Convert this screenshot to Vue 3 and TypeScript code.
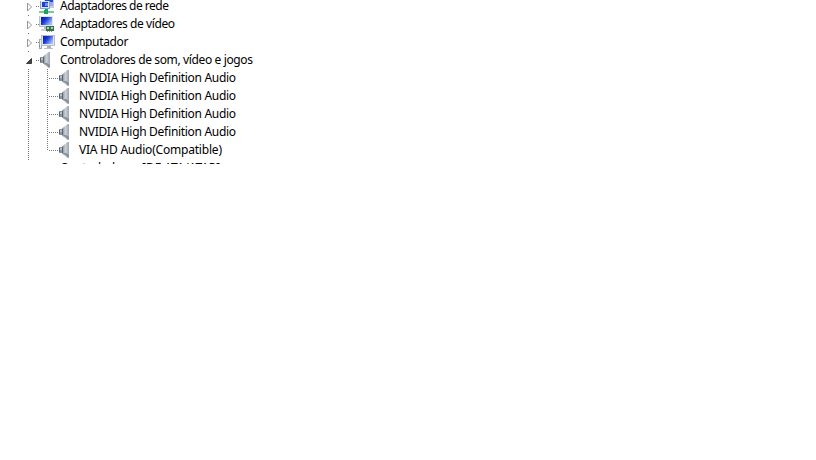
<script setup lang="ts">
type Kind = 'network' | 'display' | 'computer' | 'sound' | 'none'
interface Item { label: string; kind: Kind; child?: boolean; open?: boolean; last?: boolean; width: number }

const items: Item[] = [
  { label: 'Adaptadores de rede', kind: 'network', width: 109 },
  { label: 'Adaptadores de vídeo', kind: 'display', width: 115 },
  { label: 'Computador', kind: 'computer', width: 68.5 },
  { label: 'Controladores de som, vídeo e jogos', kind: 'sound', open: true, width: 193 },
  { label: 'NVIDIA High Definition Audio', kind: 'sound', child: true, width: 157 },
  { label: 'NVIDIA High Definition Audio', kind: 'sound', child: true, width: 157 },
  { label: 'NVIDIA High Definition Audio', kind: 'sound', child: true, width: 157 },
  { label: 'NVIDIA High Definition Audio', kind: 'sound', child: true, width: 157 },
  { label: 'VIA HD Audio(Compatible)', kind: 'sound', child: true, last: true, width: 143 },
  { label: 'Controladores IDE ATA/ATAPI', kind: 'none', width: 160 },
]
</script>

<template>
  <main class="tree">
    <div v-for="(item, i) in items" :key="i" class="row">
      <svg class="gutter" :width="item.child ? 79 : 60" height="18" aria-hidden="true">
        <g class="dots">
          <path v-if="item.child" d="M28.5 0V18" />
          <path v-else-if="item.kind !== 'none'" d="M28.5 0V1" />
          <path v-else d="M28.5 0V1" />
          <path v-if="item.child" :d="item.last ? 'M47.5 0V10' : 'M47.5 0V18'" />
          <path v-if="item.child" d="M49 9.5H59" />
          <path v-else-if="item.kind !== 'none'" d="M36 9.5H40" />
        </g>
        <g class="smooth">
          <path v-if="item.open" d="M31.5 7.5V12.5H26.5Z" fill="#444" stroke="#222" stroke-width=".8" />
          <path v-else-if="!item.child && item.kind !== 'none'" d="M27.5 6V14L31.5 10Z" fill="#fff" stroke="#969696" />
        </g>

        <g v-if="item.kind === 'sound'" class="smooth" :transform="item.child ? 'translate(59 1)' : 'translate(40 1)'">
          <path d="M3 4.5L8.5 0H10V16H8.5L3 11.5Z" fill="url(#cone)" />
          <path d="M0 5H4V11H0Z" fill="#8a97a2" />
          <path d="M0 6H1V10H0Z" fill="#59636d" />
          <path d="M1 6H3V8H1Z" fill="#b6c0c8" />
          <path d="M3 5H4V11H3Z" fill="#596570" />
          <path d="M4 11L8.5 15H10V13L7 11Z" fill="#84909a" />
        </g>
        <g v-else-if="item.kind === 'network'">
          <path d="M44 1H54V11H44Z" fill="#c4cede" />
          <path d="M45 2H53V9H45Z" fill="#2847d2" />
          <path d="M50 5H53V9H50Z" fill="#91aaf4" />
          <path d="M40 4H50V12H40Z" fill="#94a4c0" />
          <path d="M41 4H49V11H41Z" fill="#dce5f2" />
          <path d="M42 5H48V10H42Z" fill="#1b3dd5" />
          <path d="M45 6H48V9H45Z" fill="#6f92ef" />
          <path d="M39 14H54V16H39Z" fill="#73cb9c" />
          <path d="M45 12H48V17H44V13H45Z" fill="#16a75d" />
        </g>
        <g v-else-if="item.kind === 'display'">
          <path d="M39 1H53V12H39Z" fill="#b9c2ce" />
          <path d="M40 1H53V11H40Z" fill="#e1e7ef" />
          <path d="M41 2H52V10H41Z" fill="url(#screen)" />
          <path d="M44 12H48V14H44Z" fill="#b2bac3" />
          <path d="M41 14H49V16H41Z" fill="#ccd2d7" />
          <path d="M46 11H54V16H46Z" fill="#34734d" />
          <path d="M47 12H49V14H47ZM51 12H53V14H51Z" fill="#b1d4b6" />
          <path d="M47 16.5H53" stroke="#9c9c50" stroke-dasharray="1 1" />
        </g>
        <g v-else-if="item.kind === 'computer'">
          <path d="M39 6H42V16H39Z" fill="#a0a9b0" />
          <path d="M40 7H41V15H40Z" fill="#edf0f2" />
          <path d="M39 12H40V14H39Z" fill="#55a566" />
          <path d="M41 2H55V13H41Z" fill="#b4bdca" />
          <path d="M42 3H54V12H42Z" fill="#e1e8f0" />
          <path d="M43 3H53V11H43Z" fill="url(#screen)" />
          <path d="M47 13H51V15H47Z" fill="#a6aeb7" />
          <path d="M44 15H53V16H44Z" fill="#b9c0c6" />
        </g>
        <defs v-if="i === 0">
          <linearGradient id="cone"><stop stop-color="#7e8b96" /><stop offset=".5" stop-color="#cbd0d5" /><stop offset="1" stop-color="#9da5ac" /></linearGradient>
          <linearGradient id="screen" x1="0" y1="0" x2="1" y2=".6"><stop stop-color="#0b1b99" /><stop offset=".45" stop-color="#1739d9" /><stop offset="1" stop-color="#a2bcfa" /></linearGradient>
        </defs>
      </svg>
      <svg class="label" :width="item.width + 4" height="18"><text x="0" y="13" :textLength="item.width">{{ item.label }}</text></svg>
    </div>
  </main>
</template>

<style>
html, body { background: #fff; overflow: hidden; }
</style>

<style scoped>
.tree { display: flex; flex-direction: column; height: 164px; overflow: hidden; box-sizing: border-box; }
.row { display: flex; flex: 0 0 18px; height: 18px; }
.row:first-child { margin-top: -3px; }
.gutter, .label { display: block; flex: none; }
.gutter { shape-rendering: crispEdges; }
.smooth { shape-rendering: geometricPrecision; }
.dots { fill: none; stroke: #777; stroke-width: 1; stroke-dasharray: 1 1; }
.label { overflow: visible; }
.label text { font: 12px "Noto Sans", "Open Sans", sans-serif; fill: #000; }
</style>
